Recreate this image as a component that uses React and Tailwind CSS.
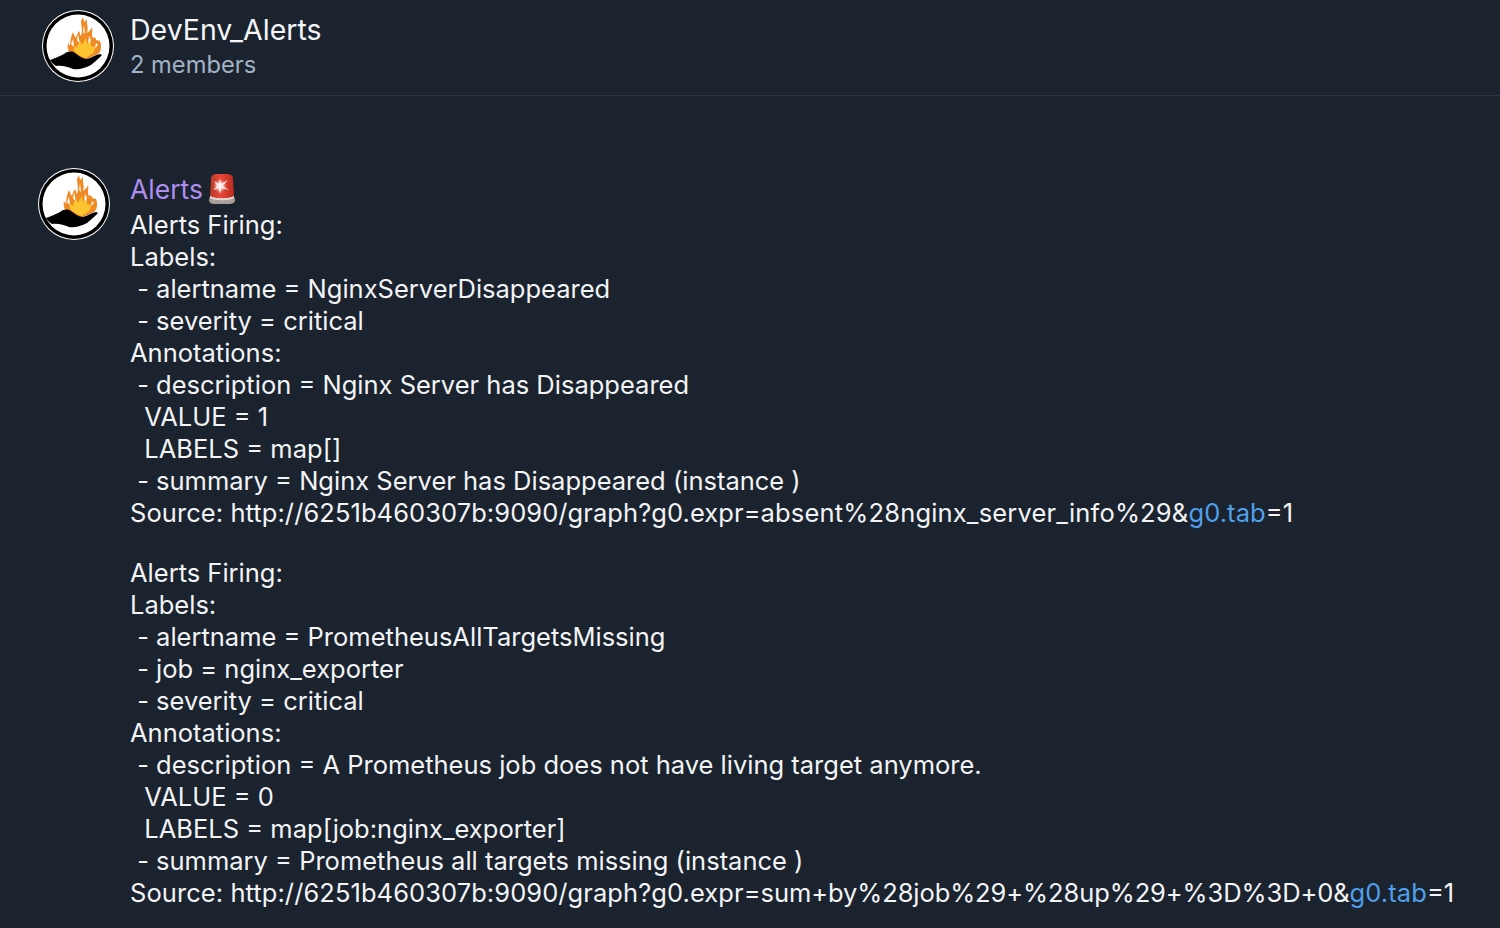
import React from 'react'

const Logo = () => (
  <svg viewBox="0 0 72 72" className="w-[72px] h-[72px] shrink-0">
    <circle cx="36" cy="36" r="36" fill="#ffffff" />
    <circle cx="36" cy="36" r="35" fill="#000000" />
    <circle cx="36" cy="36" r="31.5" fill="#ffffff" />
    {/* outer flame */}
    <path d="M44 50C38 49 32 46 28 43C26 41 25 37 26 33L28 36C28 32 29 26 31 22C32 25 33 27 34 28C34 25 36 23 37 21C38 23 38 25 39 26C41 22 39 15 39 11L41 7L42 12L45 9C44 13 47 17 45 23C47 21 49 20 50 17C51 20 49 25 51 28C53 27 54 28 54 30L58 31C60 36 59 42 56 44C52 46 48 47 44 50Z" fill="#ef8a24" />
    {/* gaps between the tongues */}
    <path d="M36 24L38 34L35 30ZM47 26L46 35L49 30ZM31 29L32 37L29 34ZM42 15L43 24L41 22ZM54 33L53 38L56 35Z" fill="#ffffff" />
    {/* inner flame */}
    <path d="M44 48C40 47 35 44 32 41C31 39 32 37 33 36L35 38C35 35 37 33 38 31L40 35C41 32 43 30 44 28L45 34C47 33 48 32 49 31L49 36L53 37C53 40 52 42 50 44C48 45 46 46 44 48Z" fill="#fbc431" />
    {/* hand */}
    <path d="M8 50C14 48 18 46 22 44C26 41 30 41 33 43C37 46 41 49 45 49C49 48 53 45 58 44L60 45C57 48 53 52 49 55C43 58 37 60 31 59C26 57 20 55 14 56C11 54 9 52 8 50Z" fill="#000000" />
  </svg>
)

const Siren = () => (
  <svg viewBox="0 0 28 32" className="w-[28px] h-[32px] shrink-0">
    <defs>
      <linearGradient id="dome" x1="0" y1="0" x2="1" y2="0">
        <stop offset="0" stopColor="#b93a26" />
        <stop offset="0.45" stopColor="#e8483a" />
        <stop offset="1" stopColor="#b92c1c" />
      </linearGradient>
      <radialGradient id="glow" cx="0.5" cy="0.5" r="0.5">
        <stop offset="0" stopColor="#ffffff" />
        <stop offset="0.45" stopColor="#ffd9d2" stopOpacity="0.8" />
        <stop offset="1" stopColor="#ff8a7a" stopOpacity="0" />
      </radialGradient>
    </defs>
    <path d="M3 6C3 2 6 1 9 1H19C22 1 25 2 25 6L26 24C26 26 24 27 22 27H6C4 27 2 26 2 24Z" fill="url(#dome)" />
    <path d="M2 23C6 26 22 26 26 23L27 27C27 30 24 31 21 31H7C4 31 1 30 1 27Z" fill="#a8a098" />
    <path d="M2 23C6 26 22 26 26 23L26 25C22 28 6 28 2 25Z" fill="#e3d8cf" />
    <circle cx="12" cy="13" r="7" fill="url(#glow)" />
    <path d="M12 5L13 11L20 7L14.5 13L21 17L13.5 15L12 21L10.5 15L5 17L9.5 13L6 8L11 11Z" fill="#fff1ee" />
  </svg>
)

const Block = ({ lines, query, queryTracking }) => (
  <div>
    {lines.map((line, i) => (
      <div key={i} className="h-8 whitespace-pre">{line}</div>
    ))}
    <div className="h-8 whitespace-pre">
      <span className="tracking-[0.07px]">Source: http://6251b460307b:9090/graph?g0.expr=</span>
      <span className={queryTracking}>{query}&amp;</span>
      <span className="text-[#4f9fea] tracking-[0.1px]">g0.tab</span>=1
    </div>
  </div>
)

export default function App() {
  return (
    <div className="w-[1500px] h-[928px] overflow-hidden bg-[#1b232e] text-white font-['Inter','Liberation_Sans',sans-serif] text-[25.5px] leading-8">
      <div className="h-24 flex items-start pl-[42px] pt-2.5 border-b border-[#2a3544]">
        <Logo />
        <div className="ml-4">
          <div className="h-[39px] leading-[39px] text-[28.5px] text-[#f4f6f8]">DevEnv_Alerts</div>
          <div className="h-8 text-[23.7px] text-[#a3b3c6]">2 members</div>
        </div>
      </div>
      <div className="flex items-start pl-[38px] pt-[72px]">
        <Logo />
        <div className="ml-5 pt-[5px] text-[#f2f4f6]">
          <div className="h-9 flex items-start gap-[5px] text-[26.5px] text-[#b08ff0]">
            Alerts <Siren />
          </div>
          <div className="flex flex-col gap-7">
            <Block
              lines={[
                'Alerts Firing:',
                'Labels:',
                ' - alertname = NginxServerDisappeared',
                ' - severity = critical',
                'Annotations:',
                ' - description = Nginx Server has Disappeared',
                '  VALUE = 1',
                '  LABELS = map[]',
                ' - summary = Nginx Server has Disappeared (instance )',
              ]}
              query="absent%28nginx_server_info%29"
              queryTracking="tracking-[0.17px]"
            />
            <Block
              lines={[
                'Alerts Firing:',
                'Labels:',
                ' - alertname = PrometheusAllTargetsMissing',
                ' - job = nginx_exporter',
                ' - severity = critical',
                'Annotations:',
                ' - description = A Prometheus job does not have living target anymore.',
                '  VALUE = 0',
                '  LABELS = map[job:nginx_exporter]',
                ' - summary = Prometheus all targets missing (instance )',
              ]}
              query="sum+by%28job%29+%28up%29+%3D%3D+0"
              queryTracking="tracking-[-0.09px]"
            />
          </div>
        </div>
      </div>
    </div>
  )
}
